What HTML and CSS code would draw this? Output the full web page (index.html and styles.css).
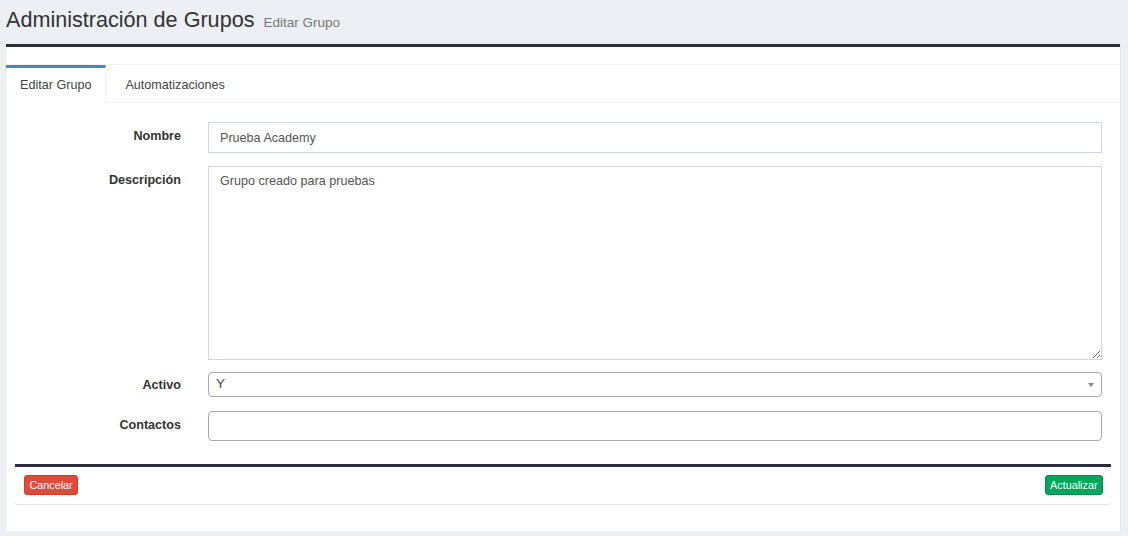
FILE: index.html
```html
<!DOCTYPE html>
<html lang="es">
<head>
<meta charset="utf-8">
<title>Administración de Grupos</title>
<link rel="stylesheet" href="styles.css">
</head>
<body>
<header class="content-header">
  <h1 class="title">Administración de Grupos <small class="subtitle">Editar Grupo</small></h1>
</header>
<section class="box">
  <div class="box-header"></div>
  <div class="tabs">
    <ul class="tab-list">
      <li class="tab active">Editar Grupo</li>
      <li class="tab">Automatizaciones</li>
      <li class="tab-fill"></li>
    </ul>
  </div>
  <form class="form">
    <div class="row">
      <label class="label">Nombre</label>
      <input class="input" type="text" value="Prueba Academy">
    </div>
    <div class="row row-desc">
      <label class="label">Descripción</label>
      <textarea class="textarea">Grupo creado para pruebas</textarea>
    </div>
    <div class="row row-select">
      <label class="label label-select">Activo</label>
      <div class="select">
        <span class="select-value">Y</span>
        <span class="select-arrow"></span>
      </div>
    </div>
    <div class="row">
      <label class="label">Contactos</label>
      <div class="multi"></div>
    </div>
  </form>
  <div class="footer">
    <button class="btn btn-danger" type="button">Cancelar</button>
    <button class="btn btn-success" type="button">Actualizar</button>
  </div>
</section>
</body>
</html>
```
FILE: styles.css
```css
* { box-sizing: border-box; }
html, body {
  margin: 0;
  padding: 0;
  background: #ecf0f5;
  font-family: "Liberation Sans", Arial, sans-serif;
  color: #333;
}
.content-header {
  height: 44px;
  padding: 4px 0 0 6px;
}
.title {
  margin: 0;
  font-size: 21.6px;
  font-weight: normal;
  line-height: 32px;
  color: #333;
}
.subtitle {
  font-size: 13.5px;
  color: #777;
  margin-left: 3px;
}
.box {
  margin: 0 8px 0 6px;
  height: 487px;
  background: #fff;
  border-top: 3px solid #2b2e3a;
  box-shadow: 0 1px 1px rgba(0,0,0,0.15);
  display: flex;
  flex-direction: column;
}
.box-header { height: 17px; }
.tabs {
  border-top: 1px solid #f1f1f1;
}
.tab-list {
  list-style: none;
  margin: 0;
  padding: 0;
  display: flex;
}
.tab {
  font-size: 12.6px;
  color: #444;
  height: 38px;
  padding: 8px 19px 0 19px;
  border-top: 3px solid transparent;
  border-bottom: 1px solid #f1f1f1;
  line-height: 18px;
}
.tab.active {
  padding: 8px 14px 0 14px;
  border-top-color: #3c8dbc;
  border-right: 1px solid #f1f1f1;
  border-bottom-color: transparent;
}
.tab-fill {
  flex: 1;
  border-bottom: 1px solid #f1f1f1;
}
.form {
  padding: 19px 18px 0 0;
  display: flex;
  flex-direction: column;
  gap: 13px;
}
.row {
  display: grid;
  grid-template-columns: 175px 1fr;
  column-gap: 27px;
  align-items: start;
}
.row-select { margin-top: -1px; margin-bottom: 1px; }
.label {
  text-align: right;
  font-size: 12.6px;
  font-weight: bold;
  color: #333;
  padding-top: 6px;
  line-height: 16px;
}
.label-select { padding-top: 5px; }
.input, .textarea {
  font-family: "Liberation Sans", Arial, sans-serif;
  font-size: 12.6px;
  color: #555;
  border: 1px solid #d2d6de;
  border-radius: 0;
  padding: 6px 11px;
  outline: none;
  width: 100%;
  margin: 0;
}
.input { height: 31px; }
.textarea {
  height: 194px;
  resize: vertical;
  line-height: 16px;
}
.select {
  height: 25px;
  border: 1px solid #aaa;
  border-radius: 4px;
  display: flex;
  align-items: center;
  justify-content: space-between;
  padding: 0 7px 0 7px;
}
.select-value {
  font-size: 13.5px;
  color: #444;
  line-height: 20px;
  margin-top: -1px;
}
.select-arrow {
  width: 0;
  height: 0;
  border-left: 3px solid transparent;
  border-right: 3px solid transparent;
  border-top: 4px solid #888;
}
.multi {
  height: 30px;
  border: 1px solid #aaa;
  border-radius: 4px;
}
.footer {
  margin: 23px 9px 0 9px;
  border-top: 3px solid #2b2e3a;
  box-shadow: 0 1px 1px rgba(0,0,0,0.12);
  border-radius: 0 0 3px 3px;
  padding: 8px 8px 9px 9px;
  display: flex;
  justify-content: space-between;
  align-items: center;
}
.btn {
  font-family: "Liberation Sans", Arial, sans-serif;
  font-size: 10.8px;
  font-weight: normal;
  line-height: 18px;
  height: 20px;
  padding: 0 4.5px;
  border-radius: 3px;
  color: #fff;
  cursor: pointer;
}
.btn-danger {
  background: #dd4b39;
  border: 1px solid #d73925;
}
.btn-success {
  background: #00a65a;
  border: 1px solid #008d4c;
}
```
